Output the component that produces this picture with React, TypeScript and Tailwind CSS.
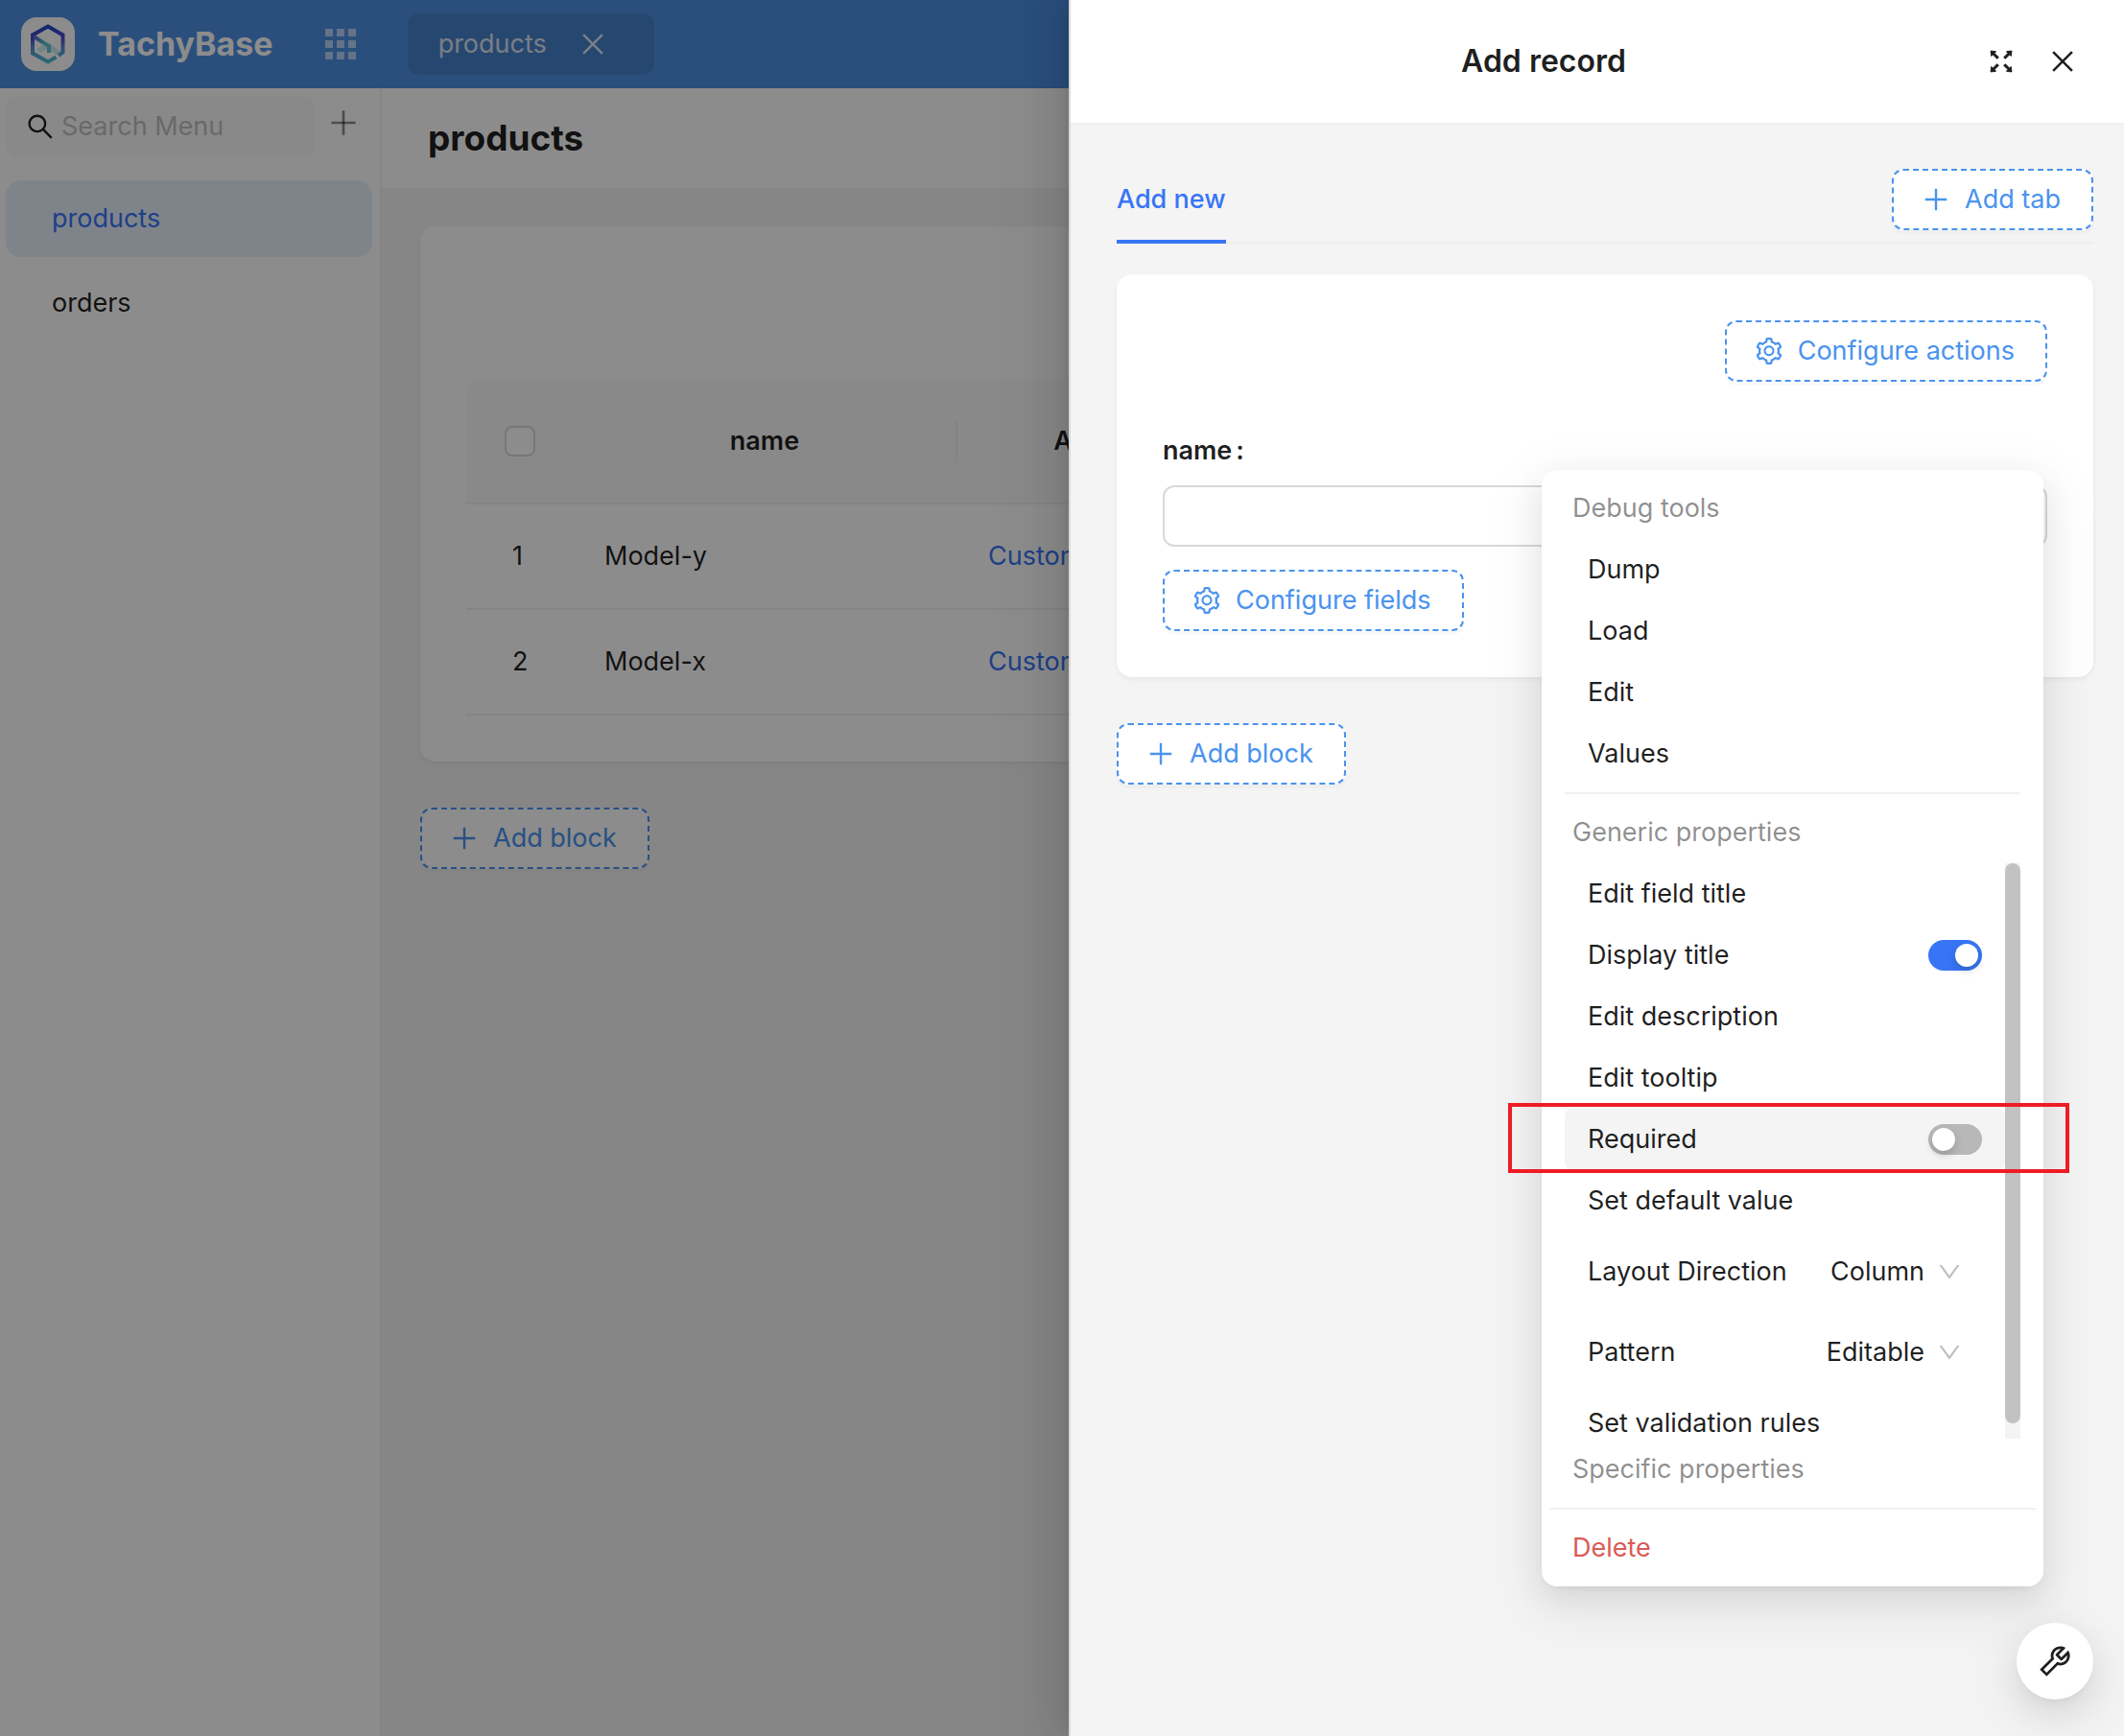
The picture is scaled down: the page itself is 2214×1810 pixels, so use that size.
import React from 'react';
import {
  AiOutlineClose,
  AiOutlineDown,
  AiOutlineFullscreen,
  AiOutlinePlus,
  AiOutlineSearch,
  AiOutlineSetting,
  AiOutlineTool,
} from 'react-icons/ai';

const cardShadow =
  'shadow-[0_2px_4px_0_rgba(0,0,0,0.03),0_2px_12px_-2px_rgba(0,0,0,0.02),0_4px_8px_0_rgba(0,0,0,0.02)]';
const popupShadow =
  'shadow-[0_12px_32px_0_rgba(0,0,0,0.08),0_6px_12px_-8px_rgba(0,0,0,0.12),0_18px_56px_16px_rgba(0,0,0,0.05)]';

function DashedButton({ icon, children }: { icon: React.ReactNode; children: React.ReactNode }) {
  return (
    <button
      type="button"
      className="inline-flex h-16 items-center gap-3.5 whitespace-nowrap rounded-xl border-2 border-dashed border-[#4a93ef] bg-white pr-8 pl-7 text-[#4a93ef] shadow-[0_4px_0_rgba(0,0,0,0.02)]"
    >
      {icon}
      <span>{children}</span>
    </button>
  );
}

function Logo() {
  return (
    <svg viewBox="0 0 56 56" className="size-14 rounded-2xl bg-white" aria-hidden="true">
      <defs>
        <linearGradient id="logo-line" x1="0" y1="0" x2="0" y2="1">
          <stop offset="0" stopColor="#2347c8" />
          <stop offset="0.35" stopColor="#5a45cc" />
          <stop offset="0.6" stopColor="#5a8fd8" />
          <stop offset="1" stopColor="#4fc0cf" />
        </linearGradient>
        <linearGradient id="logo-fold" x1="0" y1="0" x2="1" y2="1">
          <stop offset="0" stopColor="#4a66cc" />
          <stop offset="0.6" stopColor="#5cc4d2" />
        </linearGradient>
      </defs>
      <path d="M16 33 28 26 41 36 37 39 28 33 20 37Z" fill="#9fd9e0" fillOpacity="0.5" />
      <path d="M39 40 43.500 36.500V18.500L28 9.500 12 18.500V37.500L28 46.500 36.500 41.500" fill="none" stroke="url(#logo-line)" strokeWidth="4" />
      <path d="M13 20 29 30V37" fill="none" stroke="url(#logo-fold)" strokeWidth="4" />
    </svg>
  );
}

function AppsIcon() {
  return (
    <svg viewBox="0 0 32 32" className="size-8 fill-white/60" aria-hidden="true">
      {[0, 12, 24].map((y) => [0, 12, 24].map((x) => <rect key={`${x}-${y}`} x={x} y={y} width="8" height="8" />))}
    </svg>
  );
}

function TopBar() {
  return (
    <header className="flex h-[92px] items-center bg-[#4e90e3] pl-[22px] text-white">
      <Logo />
      <span className="ml-6 text-[34px] font-bold">TachyBase</span>
      <button type="button" aria-label="Applications" className="ml-[54px]">
        <AppsIcon />
      </button>
      <div className="ml-[54px] flex h-16 items-center gap-8 rounded-xl bg-black/10 px-8 text-white/80">
        <span>products</span>
        <button type="button" aria-label="Close products" className="mr-4">
          <AiOutlineClose className="size-8" />
        </button>
      </div>
    </header>
  );
}

function SideBar() {
  return (
    <aside className="w-[398px] shrink-0 border-r-2 border-[#f0f0f0] bg-white px-1.5 pt-2">
      <div className="flex items-center justify-between pr-3.5">
        <label className="flex h-16 w-[322px] items-center gap-1.5 rounded-xl bg-[#fafafa] pl-5">
          <AiOutlineSearch className="size-8 shrink-0" />
          <input type="text" aria-label="Search Menu" placeholder="Search Menu" className="w-full bg-transparent outline-none placeholder:text-[#bfbfbf]" />
        </label>
        <button type="button" aria-label="Add menu item" className="mb-2 text-black/45">
          <AiOutlinePlus className="size-9" />
        </button>
      </div>
      <nav className="mt-6 flex flex-col gap-2 pr-0.5">
        <a href="#products" className="flex h-20 items-center rounded-2xl bg-[#e8f0fe] pl-12 text-[#3875f6]">products</a>
        <a href="#orders" className="flex h-20 items-center rounded-2xl pl-12">orders</a>
      </nav>
    </aside>
  );
}

const records = [
  { id: 1, name: 'Model-y' },
  { id: 2, name: 'Model-x' },
];

function RecordsTable() {
  return (
    <table className="w-full table-fixed border-separate border-spacing-0">
      <colgroup>
        <col className="w-[112px]" />
        <col className="w-[400px]" />
        <col className="w-[300px]" />
        <col />
      </colgroup>
      <thead>
        <tr className="h-[130px]">
          <th className="rounded-tl-2xl border-b-2 border-[#f0f0f0] bg-[#fafafa]">
            <input type="checkbox" aria-label="Select all" className="ml-10 block size-8 appearance-none rounded-lg border-2 border-[#d9d9d9] bg-white" />
          </th>
          <th className="border-b-2 border-[#f0f0f0] bg-[#fafafa] p-0 font-semibold">
            <div className="flex h-11 items-center justify-center border-r-2 border-[#f0f0f0]">name</div>
          </th>
          <th className="border-b-2 border-[#f0f0f0] bg-[#fafafa] font-semibold">Actions</th>
          <th className="border-b-2 border-[#f0f0f0] bg-[#fafafa]" />
        </tr>
      </thead>
      <tbody>
        {records.map((r) => (
          <tr key={r.id} className="h-[110px]">
            <td className="border-b-2 border-[#f0f0f0] pl-12">{r.id}</td>
            <td className="border-b-2 border-[#f0f0f0] pl-8">{r.name}</td>
            <td className="border-b-2 border-[#f0f0f0] pl-8">
              <a href="#custom" className="text-[#3875f6]">Custom</a>
            </td>
            <td className="border-b-2 border-[#f0f0f0]" />
          </tr>
        ))}
      </tbody>
    </table>
  );
}

function Content() {
  return (
    <main className="min-w-0 flex-1">
      <h1 className="flex h-[104px] items-center bg-white pl-12 text-[37px] font-bold">products</h1>
      <div className="p-10">
        <section className={`mb-12 rounded-2xl bg-white px-12 pt-40 pb-12 ${cardShadow}`}>
          <RecordsTable />
        </section>
        <DashedButton icon={<AiOutlinePlus className="size-8" />}>Add block</DashedButton>
      </div>
    </main>
  );
}

function Drawer() {
  return (
    <section
      role="dialog"
      aria-label="Add record"
      className="absolute inset-y-0 right-0 flex w-[1100px] max-w-full flex-col border-l-2 border-[#d9d9d9] bg-[#f4f4f4] shadow-[-12px_0_32px_0_rgba(0,0,0,0.08),-6px_0_12px_-8px_rgba(0,0,0,0.12),-18px_0_56px_16px_rgba(0,0,0,0.05)]"
    >
      <header className="flex h-[130px] items-center border-b-2 border-[#f0f0f0] bg-white px-12">
        <h2 className="flex-1 text-center text-[32px] font-semibold">Add record</h2>
        <button type="button" aria-label="Full screen" className="ml-4">
          <AiOutlineFullscreen className="size-8" stroke="currentColor" strokeWidth="24" />
        </button>
        <button type="button" aria-label="Close" className="ml-8">
          <AiOutlineClose className="size-8" />
        </button>
      </header>
      <div className="pt-[46px] pr-8 pl-12">
        <div className="mb-8 flex h-[78px] justify-between border-b-2 border-[#eeeeee]">
          <button type="button" className="-mb-0.5 h-[78px] border-b-4 border-[#3875f6] pb-2.5 font-medium text-[#3875f6]">Add new</button>
          <DashedButton icon={<AiOutlinePlus className="size-8" />}>Add tab</DashedButton>
        </div>
        <form className={`mb-12 rounded-2xl bg-white p-12 ${cardShadow}`}>
          <div className="flex justify-end">
            <DashedButton icon={<AiOutlineSetting className="size-8" />}>Configure actions</DashedButton>
          </div>
          <label htmlFor="record-name" className="mt-12 flex h-12 items-center font-semibold">
            name<span className="ml-1">:</span>
          </label>
          <input id="record-name" type="text" className="mt-3 mb-6 block h-16 w-full rounded-xl border-2 border-[#d9d9d9] bg-white px-5 outline-none" />
          <DashedButton icon={<AiOutlineSetting className="size-8" />}>Configure fields</DashedButton>
        </form>
        <DashedButton icon={<AiOutlinePlus className="size-8" />}>Add block</DashedButton>
      </div>
    </section>
  );
}

function MenuTitle({ children }: { children: React.ReactNode }) {
  return <div className="flex h-16 items-center px-6 text-black/45">{children}</div>;
}

function MenuItem({ children }: { children: React.ReactNode }) {
  return (
    <button type="button" className="flex h-16 w-full items-center px-6 text-left">
      {children}
    </button>
  );
}

function SwitchItem({ label, on, active }: { label: string; on: boolean; active?: boolean }) {
  return (
    <label className={active ? 'flex h-16 items-center justify-between rounded-lg bg-[#f4f4f4] px-6' : 'flex h-16 items-center justify-between px-6'}>
      {label}
      <input
        type="checkbox"
        role="switch"
        defaultChecked={on}
        className="flex h-8 w-14 appearance-none items-center rounded-full bg-[#b8b8b8] px-1 before:size-6 before:rounded-full before:bg-white before:shadow-[0_4px_8px_rgba(0,35,11,0.2)] checked:justify-end checked:bg-[#3875f6]"
      />
    </label>
  );
}

function SelectItem({ label, value, other }: { label: string; value: string; other: string }) {
  return (
    <label className="flex h-[84px] items-center justify-between pr-11 pl-6">
      {label}
      <span className="relative flex items-center">
        <select defaultValue={value} className="w-44 appearance-none bg-transparent pr-10 outline-none [text-align-last:right]">
          <option>{value}</option>
          <option>{other}</option>
        </select>
        <AiOutlineDown className="pointer-events-none absolute right-0 size-7 text-[#bfbfbf]" />
      </span>
    </label>
  );
}

function SettingsMenu() {
  return (
    <div className={`absolute top-[490px] right-[84px] w-[523px] rounded-2xl bg-white p-2 ${popupShadow}`}>
      <MenuTitle>Debug tools</MenuTitle>
      <div className="px-4">
        <MenuItem>Dump</MenuItem>
        <MenuItem>Load</MenuItem>
        <MenuItem>Edit</MenuItem>
        <MenuItem>Values</MenuItem>
        <hr className="my-2 border-t-2 border-[#f0f0f0]" />
      </div>
      <MenuTitle>Generic properties</MenuTitle>
      <div className="flex h-[600px] px-4">
        <div className="min-w-0 flex-1 overflow-hidden">
          <MenuItem>Edit field title</MenuItem>
          <SwitchItem label="Display title" on />
          <MenuItem>Edit description</MenuItem>
          <MenuItem>Edit tooltip</MenuItem>
          <SwitchItem label="Required" on={false} active />
          <MenuItem>Set default value</MenuItem>
          <SelectItem label="Layout Direction" value="Column" other="Row" />
          <SelectItem label="Pattern" value="Editable" other="Readonly" />
          <MenuItem>Set validation rules</MenuItem>
        </div>
        <div className="w-4 bg-[#f4f4f4]">
          <div className="h-[584px] rounded-full bg-[#c2c2c2]" />
        </div>
      </div>
      <MenuTitle>Specific properties</MenuTitle>
      <hr className="my-2 border-t-2 border-[#f0f0f0]" />
      <button type="button" className="flex h-16 w-full items-center px-6 text-[#db5a56]">Delete</button>
      <div className="pointer-events-none absolute top-[660px] -right-[27px] -left-[35px] h-[73px] border-4 border-[#ee1c25]" />
    </div>
  );
}

export default function App() {
  return (
    <div className="relative h-screen overflow-hidden bg-[#f4f4f4] font-['Inter',sans-serif] text-[27px] leading-[42px] text-black/88">
      <div className="flex h-full flex-col">
        <TopBar />
        <div className="flex min-h-0 flex-1">
          <SideBar />
          <Content />
        </div>
      </div>
      <div className="absolute inset-0 bg-black/45" />
      <Drawer />
      <SettingsMenu />
      <button
        type="button"
        aria-label="Tools"
        className={`absolute right-8 bottom-[38px] flex size-20 items-center justify-center rounded-full bg-white ${popupShadow}`}
      >
        <AiOutlineTool className="size-10" />
      </button>
    </div>
  );
}
